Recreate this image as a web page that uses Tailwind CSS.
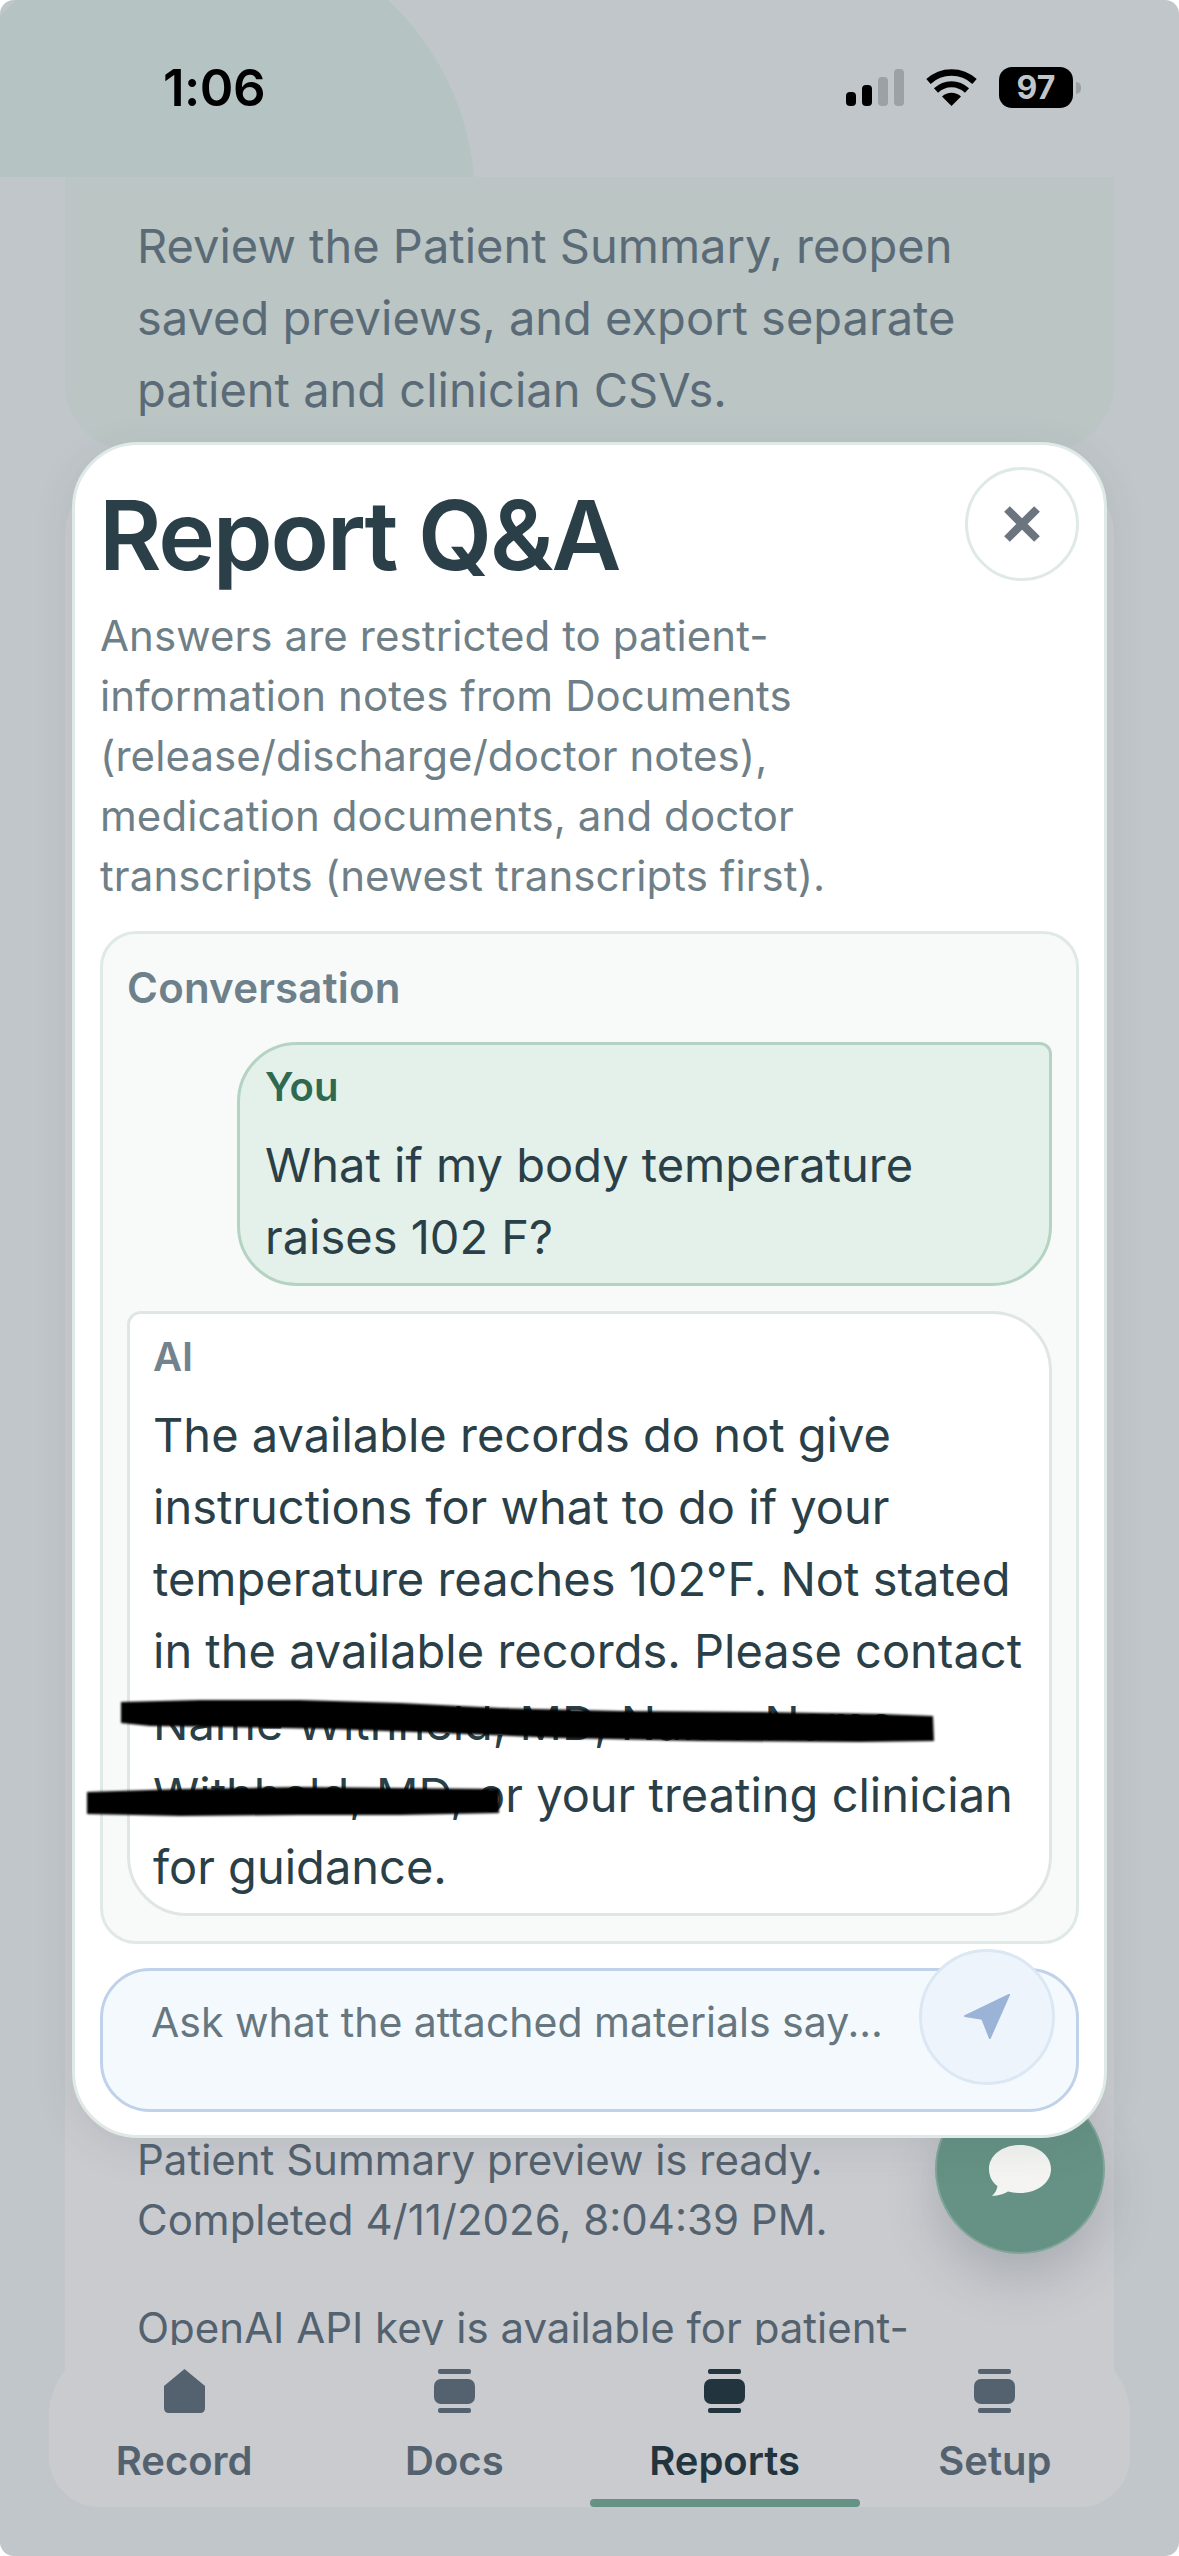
<!DOCTYPE html>
<html lang="en">
<head>
  <meta charset="UTF-8">
  <meta name="viewport" content="width=device-width, initial-scale=1.0">
  <title>Report Q&amp;A</title>
  <script src="https://cdn.jsdelivr.net/npm/@tailwindcss/browser@4"></script>
</head>
<body class="bg-white font-['Inter',sans-serif]">
  <div class="relative w-[1179px] h-[2556px] overflow-hidden flex flex-col rounded-[14px] bg-[#c0c6c9]">

    <!-- status bar -->
    <header class="relative h-[177px] shrink-0 overflow-hidden">
      <div class="absolute left-[-71px] top-[-73px] w-[546px] h-[546px] rounded-full bg-[#b5c4c3]"></div>
      <div class="absolute left-0 top-[100px] w-[200px] h-[77px] bg-[#b5c4c3]"></div>
      <span class="absolute left-[163px] top-[58px] text-[51px] leading-[60px] font-semibold tracking-[-0.5px] text-black">1:06</span>
      <div class="absolute left-[846px] top-[67px] flex items-center gap-[22px]">
        <svg width="58" height="37" viewBox="0 0 58 37">
          <rect x="0" y="23" width="10" height="14" rx="4" fill="#000"/>
          <rect x="16" y="16" width="10" height="21" rx="4" fill="#000"/>
          <rect x="32" y="8" width="10" height="29" rx="4" fill="#9ba1a4"/>
          <rect x="48" y="0" width="10" height="37" rx="4" fill="#9ba1a4"/>
        </svg>
        <svg width="51" height="37" viewBox="0 0 51 37">
          <path d="M25.500 37L16 27.500C21.500 22.500 29.500 22.500 35 27.500Z" fill="#000"/>
          <path d="M10 21.500C19 13 32 13 41 21.500" fill="none" stroke="#000" stroke-width="6"/>
          <path d="M2.500 12.500C15.500 0.500 35.500 0.500 48.500 12.500" fill="none" stroke="#000" stroke-width="6.500"/>
        </svg>
        <div class="flex items-center gap-[3px]">
          <div class="w-[74px] h-[41px] rounded-[13px] bg-black flex items-center justify-center text-[32px] leading-none font-bold text-[#c0c6c9]">97</div>
          <div class="w-[5px] h-[12px] rounded-r-full bg-[#9ba1a4]"></div>
        </div>
      </div>
    </header>

    <!-- page behind the sheet -->
    <section class="mx-[65px] h-[273px] shrink-0 rounded-b-[66px] bg-[#bac5c4] px-[72px] pt-[33px] text-[47px] leading-[72px] text-[#5a6b77]">
      <p>Review the Patient Summary, reopen saved previews, and export separate patient and clinician CSVs.</p>
    </section>
    <section class="mx-[65px] mt-[20px] -mb-[70px] flex-1 min-h-0 overflow-hidden rounded-t-[66px] bg-[#c9cbcf] pl-[72px] pr-[140px] pt-[1660px] text-[42px] leading-[60px] text-[#53626e]">
      <p>Patient Summary preview is ready.<br>Completed 4/11/2026, 8:04:39 PM.</p>
      <p class="mt-[48px]">OpenAI API key is available for patient-</p>
    </section>

    <!-- bottom tabs -->
    <nav class="relative mx-[49px] mb-[49px] h-[162px] shrink-0 rounded-t-[70px] rounded-b-[50px] bg-[#c9cbcf] grid grid-cols-4 pt-[24px] text-[40px] leading-[46px] font-semibold text-[#53626e]">
      <a class="flex flex-col items-center gap-[25px]">
        <svg width="41" height="44" viewBox="0 0 41 44" class="fill-[#53626e]"><path d="M20.500 0L41 17V39Q41 44 36 44H5Q0 44 0 39V17Z"/></svg>
        Record
      </a>
      <a class="flex flex-col items-center gap-[25px]">
        <svg width="41" height="44" viewBox="0 0 41 44" class="fill-[#53626e]"><rect x="4" width="33" height="5" rx="2"/><rect y="10" width="41" height="25" rx="7"/><rect x="4" y="39" width="33" height="5" rx="2"/></svg>
        Docs
      </a>
      <a class="relative flex flex-col items-center gap-[25px] text-[#22343e]">
        <svg width="41" height="44" viewBox="0 0 41 44" class="fill-[#22343e]"><rect x="4" width="33" height="5" rx="2"/><rect y="10" width="41" height="25" rx="7"/><rect x="4" y="39" width="33" height="5" rx="2"/></svg>
        Reports
        <span class="absolute bottom-0 left-0 w-[270px] h-[8px] rounded-[4px] bg-[#659284]"></span>
      </a>
      <a class="flex flex-col items-center gap-[25px]">
        <svg width="41" height="44" viewBox="0 0 41 44" class="fill-[#53626e]"><rect x="4" width="33" height="5" rx="2"/><rect y="10" width="41" height="25" rx="7"/><rect x="4" y="39" width="33" height="5" rx="2"/></svg>
        Setup
      </a>
    </nav>

    <!-- chat button -->
    <button class="absolute left-[935px] top-[2084px] w-[170px] h-[170px] rounded-full bg-[#659284] border-[2px] border-[#7fa596] shadow-[0_24px_50px_rgba(60,70,80,0.22)] flex items-center justify-center">
      <svg width="62" height="51" viewBox="0 0 62 51" class="mt-[2px]"><path d="M31 0C48 0 62 10 62 24C62 38 48 48 31 48C27 48 23 47.500 19 46.500C15 49 10 50.500 3 51C6 48 8 45 8.500 41C3 37 0 31 0 24C0 10 14 0 31 0Z" fill="#f4f5f2"/></svg>
    </button>

    <!-- report q&a sheet -->
    <div class="absolute left-[72px] top-[442px] w-[1035px] h-[1696px] rounded-[66px] border-[3px] border-[#dfe9e6] bg-white px-[25px] pt-[22px] shadow-[0_10px_40px_rgba(60,70,80,0.10)]">
      <div class="flex justify-between items-start">
        <div class="w-[860px] pt-[13px]">
          <h1 class="-ml-[1px] text-[96px] leading-[110px] font-semibold tracking-[-2.2px] text-[#2a3f47]">Report Q&amp;A</h1>
          <p class="mt-[16px] text-[42px] leading-[60px] tracking-[0.08px] text-[#6f7f87]">Answers are restricted to patient-information notes from Documents (release/discharge/doctor notes), medication documents, and doctor transcripts (newest transcripts first).</p>
        </div>
        <button class="w-[114px] h-[114px] shrink-0 rounded-full border-[3px] border-[#dfe9e6] flex items-center justify-center">
          <svg width="38" height="38" viewBox="0 0 38 38" class="stroke-[#6c7480]"><path d="M4 4L34 34M34 4L4 34" fill="none" stroke-width="8"/></svg>
        </button>
      </div>

      <div class="mt-[25px] rounded-[36px] border-[3px] border-[#dfe9e6] bg-[#f8faf9] px-[24px] pt-[24px]">
        <div class="text-[42px] leading-[60px] font-semibold tracking-[0.2px] text-[#6e808a]">Conversation</div>
        <div class="mt-[24px] ml-[110px] rounded-tl-[60px] rounded-tr-[12px] rounded-b-[60px] border-[3px] border-[#b5d3c2] bg-[#e3f1ea] px-[25px] pt-[17px] pb-[10px]">
          <div class="text-[40px] leading-[50px] font-semibold text-[#2f6a50]">You</div>
          <p class="mt-[17px] text-[47px] leading-[72px] text-[#2a3f47]">What if my body temperature raises 102 F?</p>
        </div>
        <div class="mt-[25px] rounded-tl-[14px] rounded-tr-[60px] rounded-b-[60px] border-[3px] border-[#dfe6e4] bg-white pl-[23px] pr-[8px] pt-[18px] pb-[10px] mb-[25px]">
          <div class="text-[40px] leading-[50px] font-semibold text-[#73838d]">AI</div>
          <p class="mt-[17px] text-[47px] leading-[72px] text-[#2a3f47]">The available records do not give instructions for what to do if your temperature reaches 102°F. Not stated in the available records. Please contact<br>Name Withheld, MD, Name Name<br>Withheld, MD, or your treating clinician<br>for guidance.</p>
        </div>
      </div>

      <div class="relative mt-[24px] h-[144px] rounded-[50px] border-[3px] border-[#bfd2ea] bg-[#f4f9fe] pl-[48px] pt-[21px] text-[41px] leading-[60px] text-[#66777f]">
        Ask what the attached materials say...
        <button class="absolute left-[816px] top-[-22px] w-[136px] h-[136px] rounded-full border-[3px] border-[#dce7f4] bg-[#edf4fc] flex items-center justify-center">
          <svg width="46" height="46" viewBox="0 0 48 48"><path d="M47 1L1 23L19 26L27 46Z" fill="#9bb3d6" stroke="#9bb3d6" stroke-width="2" stroke-linejoin="round"/></svg>
        </button>
      </div>
    </div>

    <!-- redaction scribbles over the names -->
    <svg class="absolute left-0 top-0 blur-[1px]" width="1179" height="2556" viewBox="0 0 1179 2556">
      <path d="M121 1702L200 1700L300 1700L400 1703L500 1708L620 1711L760 1712L880 1714L933 1716L934 1741L860 1742L700 1741L560 1738L440 1733L330 1729L220 1727L150 1726L121 1723Z" fill="#000"/>
      <path d="M87 1792L180 1789L300 1787L400 1788L499 1789L499 1813L400 1815L300 1815L180 1816L87 1814Z" fill="#000"/>
    </svg>
  </div>
</body>
</html>
